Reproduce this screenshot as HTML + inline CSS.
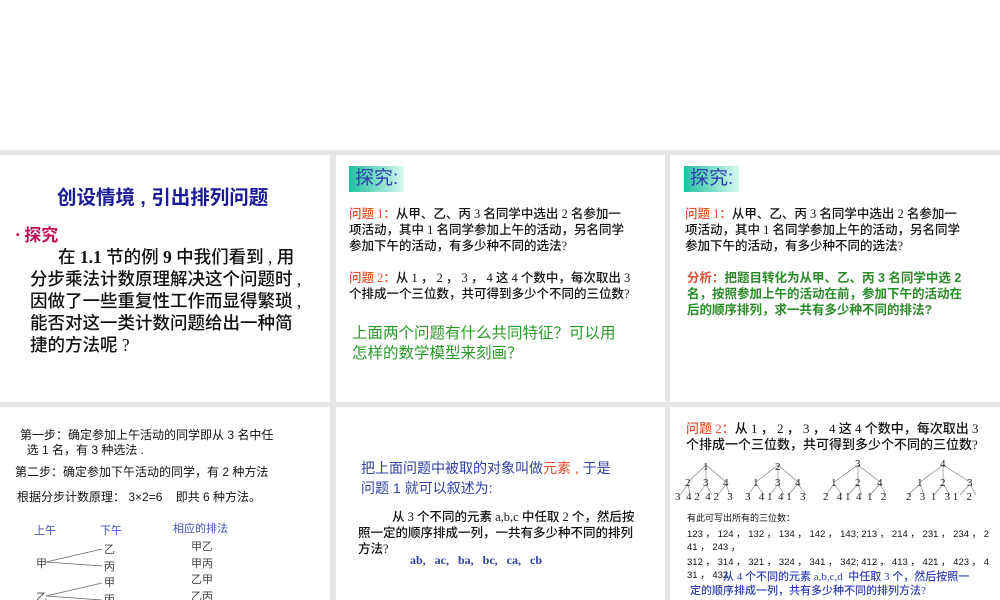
<!DOCTYPE html>
<html><head><meta charset="utf-8"><style>
body{margin:0;width:1000px;height:600px;background:#fff;position:relative;overflow:hidden;font-family:"Liberation Serif","Noto Sans CJK SC",serif;}
.bg{position:absolute;left:0;top:150px;width:1000px;height:450px;background:#e6e6e6}
.p{position:absolute;background:#fff;overflow:hidden}
.a{position:absolute;white-space:nowrap}
.t{font-family:"Liberation Sans","Noto Sans CJK SC",sans-serif}
.r{color:#e05030}
.tag{position:absolute;background:linear-gradient(90deg,#20c0a0,#d8f8f0);color:#3040b0;font-size:19px;padding:0 6px;height:26px;line-height:26px;font-family:"Liberation Sans","Noto Sans CJK SC",sans-serif}
.q{font-size:12.5px;line-height:16px;color:#111;font-weight:500}
</style></head><body>
<div class="bg"></div>

<div class="p" style="left:0;top:155px;width:330px;height:247px">
 <div class="a t" style="left:57px;top:26px;font-size:19.5px;font-weight:bold;color:#1a1a9a">创设情境 , 引出排列问题</div>
 <div class="a t" style="left:16px;top:66px;font-size:17px;font-weight:bold;color:#c0105a"><span style="font-size:10px;vertical-align:3px">•</span> 探究</div>
 <div class="a" style="left:30px;top:91px;font-size:17.5px;line-height:22px;color:#111;font-weight:500">
 <span style="padding-left:28px"></span>在 <b>1.1</b> 节的例 <b>9</b> 中我们看到 , 用<br>分步乘法计数原理解决这个问题时 ,<br>因做了一些重复性工作而显得繁琐 ,<br>能否对这一类计数问题给出一种简<br>捷的方法呢 ?</div>
</div>

<div class="p" style="left:336px;top:155px;width:329px;height:247px">
 <div class="tag" style="left:13px;top:11px">探究:</div>
 <div class="a q" style="left:13px;top:51px"><span class="r">问题 1：</span>从甲、乙、丙 3 名同学中选出 2 名参加一<br>项活动，其中 1 名同学参加上午的活动，另名同学<br>参加下午的活动，有多少种不同的选法?</div>
 <div class="a q" style="left:13px;top:115px"><span class="r">问题 2：</span>从 1 ， 2 ， 3 ， 4 这 4 个数中，每次取出 3<br>个排成一个三位数，共可得到多少个不同的三位数?</div>
 <div class="a t" style="left:16px;top:169px;font-size:15.5px;line-height:20px;color:#2a9a2a">上面两个问题有什么共同特征？可以用<br>怎样的数学模型来刻画？</div>
</div>

<div class="p" style="left:670px;top:155px;width:330px;height:247px">
 <div class="tag" style="left:14px;top:11px">探究:</div>
 <div class="a q" style="left:15px;top:51px"><span class="r">问题 1：</span>从甲、乙、丙 3 名同学中选出 2 名参加一<br>项活动，其中 1 名同学参加上午的活动，另名同学<br>参加下午的活动，有多少种不同的选法?</div>
 <div class="a t" style="left:17px;top:115px;font-size:12.5px;line-height:16px;color:#2a8a2a;font-weight:bold"><span class="r">分析：</span>把题目转化为从甲、乙、丙 3 名同学中选 2<br>名，按照参加上午的活动在前，参加下午的活动在<br>后的顺序排列，求一共有多少种不同的排法?</div>
</div>

<div class="p t" style="left:0;top:407px;width:330px;height:193px;font-size:12px;color:#111">
 <div class="a" style="left:20px;top:21px;line-height:15px">第一步：确定参加上午活动的同学即从 3 名中任<br>&nbsp;&nbsp;选 1 名，有 3 种选法 .</div>
 <div class="a" style="left:15px;top:56px">第二步：确定参加下午活动的同学，有 2 种方法</div>
 <div class="a" style="left:17px;top:81px">根据分步计数原理： 3×2=6&nbsp;&nbsp;&nbsp;&nbsp;即共 6 种方法。</div>
 <div class="a" style="left:34px;top:115px;font-size:11px;color:#4050c0">上午</div>
 <div class="a" style="left:100px;top:115px;font-size:11px;color:#4050c0">下午</div>
 <div class="a" style="left:173px;top:113px;font-size:11px;color:#4050c0">相应的排法</div>
 <svg class="a" style="left:0;top:0" width="330" height="193"><g stroke="#666" stroke-width="0.8"><line x1="46" y1="155" x2="102" y2="142"/><line x1="46" y1="155" x2="102" y2="159"/><line x1="46" y1="189" x2="102" y2="176"/><line x1="46" y1="189" x2="102" y2="193"/></g></svg>
 <div class="a" style="left:104px;top:135px;font-size:11px;color:#444;line-height:16.5px">乙<br>丙<br>甲<br>丙</div>
 <div class="a" style="left:36px;top:148px;font-size:11px;color:#444">甲</div>
 <div class="a" style="left:36px;top:182px;font-size:11px;color:#444">乙</div>
 <div class="a" style="left:191px;top:132px;font-size:11px;color:#444;line-height:16.5px">甲乙<br>甲丙<br>乙甲<br>乙丙</div>
</div>

<div class="p" style="left:336px;top:407px;width:329px;height:193px">
 <div class="a t" style="left:25px;top:51px;font-size:14px;line-height:20px;color:#3040a0">把上面问题中被取的对象叫做<span class="r">元素 , </span>于是<br>问题 1 就可以叙述为:</div>
 <div class="a q" style="left:22px;top:102px"><span style="padding-left:34px"></span>从 3 个不同的元素 a,b,c 中任取 2 个，然后按<br>照一定的顺序排成一列，一共有多少种不同的排列<br>方法?</div>
 <div class="a" style="left:74px;top:146px;font-size:12px;font-weight:bold;color:#3040a0">ab,&nbsp;&nbsp; ac,&nbsp;&nbsp; ba,&nbsp;&nbsp; bc,&nbsp;&nbsp; ca,&nbsp;&nbsp; cb</div>
</div>

<div class="p" style="left:670px;top:407px;width:330px;height:193px">
 <div class="a q" style="left:16px;top:14px;font-size:13px"><span class="r">问题 2：</span>从 1 ， 2 ， 3 ， 4 这 4 个数中，每次取出 3<br>个排成一个三位数，共可得到多少个不同的三位数?</div>
 <svg class="a" style="left:0;top:0" width="330" height="100" font-family="Liberation Serif" font-size="11" fill="#222">
 <g stroke="#777" stroke-width="0.6" fill="none">
 <path d="M36 58L18 75M36 58L36 75M36 58L56 75M18 77L10 88M18 77L20 88M36 77L28 88M36 77L42 88M56 77L48 88M56 77L60 88"/>
 <path d="M108 58L86 75M108 58L108 75M108 58L128 75M86 77L78 88M86 77L94 88M108 77L100 88M108 77L114 88M128 77L118 88M128 77L136 88"/>
 <path d="M188 58L164 75M188 58L188 75M188 58L210 75M164 77L156 88M164 77L172 88M188 77L178 88M188 77L192 88M210 77L200 88M210 77L216 88"/>
 <path d="M273 58L250 75M273 58L273 75M273 58L300 75M250 77L238 88M250 77L254 88M273 77L264 88M273 77L280 88M300 77L290 88M300 77L306 88"/></g>
 <text x="33" y="63">1</text><text x="15" y="79">2</text><text x="33" y="79">3</text><text x="53" y="79">4</text>
 <text x="5" y="93">3&#160;&#160;4 2&#160;&#160;4 2&#160;&#160;&#160;3</text>
 <text x="105" y="63">2</text><text x="83" y="79">1</text><text x="105" y="79">3</text><text x="125" y="79">4</text>
 <text x="75" y="93">3&#160;&#160;&#160;4 1&#160;&#160;4 1&#160;&#160;&#160;3</text>
 <text x="185" y="60">3</text><text x="161" y="79">1</text><text x="185" y="79">2</text><text x="207" y="79">4</text>
 <text x="153" y="93">2&#160;&#160;&#160;4 1&#160;&#160;4&#160;&#160;1&#160;&#160;&#160;2</text>
 <text x="270" y="60">4</text><text x="247" y="79">1</text><text x="270" y="79">2</text><text x="297" y="79">3</text>
 <text x="236" y="93">2&#160;&#160;&#160;3&#160;&#160;1&#160;&#160;&#160;3 1&#160;&#160;&#160;2</text>
 </svg>
 <div class="a t" style="left:17px;top:104px;font-size:9px;color:#111">有此可写出所有的三位数：</div>
 <div class="a t" style="left:17px;top:121px;font-size:9.5px;line-height:13px;color:#111">123 ， 124 ， 132 ， 134 ， 142 ， 143; 213 ， 214 ， 231 ， 234 ， 2<br>41 ， 243 ，</div>
 <div class="a t" style="left:17px;top:149px;font-size:9.5px;line-height:13px;color:#111">312 ， 314 ， 321 ， 324 ， 341 ， 342; 412 ， 413 ， 421 ， 423 ， 4<br>31 ， 432</div>
 <div class="a" style="left:20px;top:163px;font-size:11px;line-height:14px;color:#3040b0;font-weight:500"><span style="padding-left:33px"></span>从 4 个不同的元素 a,b,c,d&nbsp; 中任取 3 个，然后按照一<br>定的顺序排成一列，共有多少种不同的排列方法?</div>
</div>
</body></html>
